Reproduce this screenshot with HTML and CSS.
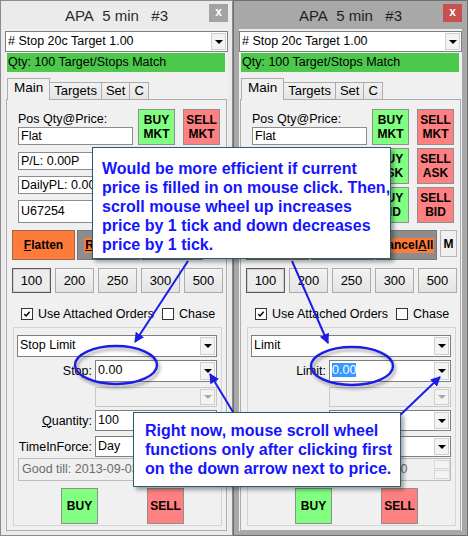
FILE: index.html
```html
<!DOCTYPE html>
<html lang="en">
<head>
    <meta charset="UTF-8">
    <meta name="viewport" content="width=device-width, initial-scale=1.0">
    <title>APA 5 min #3 - Order Entry</title>
    <link rel="stylesheet" href="styles.css">
</head>
<body>

<div class="desk">

    <!-- inactive window: stop limit -->
    <div class="win win-left">
        <div class="titlebar">
            <span></span>
            <span class="title">APA&nbsp; 5 min &nbsp; #3</span>
            <span class="close">x</span>
        </div>
        <div class="client">
            <div class="combo strategy"><span class="val"># Stop 20c Target 1.00</span><span class="drop"></span></div>
            <div class="status">Qty: 100 Target/Stops Match</div>
            <div class="tabs">
                <span class="tab active">Main</span>
                <span class="tab">Targets</span>
                <span class="tab">Set</span>
                <span class="tab">C</span>
            </div>
            <div class="pane">
                <div class="top">
                    <div class="fields">
                        <div class="lbl">Pos Qty@Price:</div>
                        <div class="box pos">Flat</div>
                        <div class="box pl">P/L: 0.00P</div>
                        <div class="box pl">DailyPL: 0.00P</div>
                        <div class="box acct">U67254</div>
                    </div>
                    <div class="orders">
                        <button class="ord buy">BUY<br>MKT</button>
                        <button class="ord sell">SELL<br>MKT</button>
                        <button class="ord buy">BUY<br>ASK</button>
                        <button class="ord sell">SELL<br>ASK</button>
                        <button class="ord buy">BUY<br>BID</button>
                        <button class="ord sell">SELL<br>BID</button>
                    </div>
                </div>
                <div class="actions">
                    <button class="act flat"><u>F</u>latten</button>
                    <button class="act grey"><span><u>R</u>everse</span></button>
                    <button class="act grey"><span>Cancel<u>A</u>ll</span></button>
                    <button class="act m">M</button>
                </div>
                <div class="qtys">
                    <button class="qty on">100</button>
                    <button class="qty">200</button>
                    <button class="qty">250</button>
                    <button class="qty">300</button>
                    <button class="qty">500</button>
                </div>
                <div class="checks">
                    <span class="chk on"><svg viewBox="0 0 13 13"><path d="M3 6.5 L5.3 9 L10 3.5" /></svg></span>
                    <span class="chk-text attach">Use Attached Orders</span>
                    <span class="chk"></span>
                    <span class="chk-text">Chase</span>
                </div>
                <div class="group">
                    <div class="combo type"><span class="val">Stop Limit</span><span class="drop"></span></div>
                    <div class="row r-price"><span class="rl">Stop:</span><div class="combo"><span class="val">0.00</span><span class="drop"></span></div></div>
                    <div class="row r-off"><span class="rl"></span><div class="combo off"><span class="val"></span><span class="drop"></span></div></div>
                    <div class="row r-qty"><span class="rl"><u>Q</u>uantity:</span><div class="combo"><span class="val">100</span><span class="drop"></span></div></div>
                    <div class="row r-tif"><span class="rl">TimeInForce:</span><div class="combo"><span class="val">Day</span><span class="drop"></span></div></div>
                    <div class="gtd"><span class="val">Good till: 2013-09-03 16:00</span><span class="spin"><i></i><i></i></span></div>
                    <div class="sides">
                        <button class="side buy">BUY</button>
                        <button class="side sell">SELL</button>
                    </div>
                </div>
            </div>
        </div>
    </div>

    <!-- active window: limit -->
    <div class="win win-right">
        <div class="titlebar">
            <span></span>
            <span class="title">APA&nbsp; 5 min &nbsp; #3</span>
            <span class="close">x</span>
        </div>
        <div class="client">
            <div class="combo strategy"><span class="val"># Stop 20c Target 1.00</span><span class="drop"></span></div>
            <div class="status">Qty: 100 Target/Stops Match</div>
            <div class="tabs">
                <span class="tab active">Main</span>
                <span class="tab">Targets</span>
                <span class="tab">Set</span>
                <span class="tab">C</span>
            </div>
            <div class="pane">
                <div class="top">
                    <div class="fields">
                        <div class="lbl">Pos Qty@Price:</div>
                        <div class="box pos">Flat</div>
                        <div class="box pl">P/L: 0.00P</div>
                        <div class="box pl">DailyPL: 0.00P</div>
                        <div class="box acct">U67254</div>
                    </div>
                    <div class="orders">
                        <button class="ord buy">BUY<br>MKT</button>
                        <button class="ord sell">SELL<br>MKT</button>
                        <button class="ord buy">BUY<br>ASK</button>
                        <button class="ord sell">SELL<br>ASK</button>
                        <button class="ord buy">BUY<br>BID</button>
                        <button class="ord sell">SELL<br>BID</button>
                    </div>
                </div>
                <div class="actions">
                    <button class="act flat"><u>F</u>latten</button>
                    <button class="act grey"><span><u>R</u>everse</span></button>
                    <button class="act grey"><span>Cancel<u>A</u>ll</span></button>
                    <button class="act m">M</button>
                </div>
                <div class="qtys">
                    <button class="qty on">100</button>
                    <button class="qty">200</button>
                    <button class="qty">250</button>
                    <button class="qty">300</button>
                    <button class="qty">500</button>
                </div>
                <div class="checks">
                    <span class="chk on"><svg viewBox="0 0 13 13"><path d="M3 6.5 L5.3 9 L10 3.5" /></svg></span>
                    <span class="chk-text attach">Use Attached Orders</span>
                    <span class="chk"></span>
                    <span class="chk-text">Chase</span>
                </div>
                <div class="group">
                    <div class="combo type"><span class="val">Limit</span><span class="drop"></span></div>
                    <div class="row r-price"><span class="rl">Limit:</span><div class="combo"><span class="val"><span class="sel">0.00</span></span><span class="drop"></span></div></div>
                    <div class="row r-off"><span class="rl"></span><div class="combo off"><span class="val"></span><span class="drop"></span></div></div>
                    <div class="row r-qty"><span class="rl"><u>Q</u>uantity:</span><div class="combo"><span class="val">100</span><span class="drop"></span></div></div>
                    <div class="row r-tif"><span class="rl">TimeInForce:</span><div class="combo"><span class="val">Day</span><span class="drop"></span></div></div>
                    <div class="gtd"><span class="val">Good till: 2013-09-03 16:00</span><span class="spin"><i></i><i></i></span></div>
                    <div class="sides">
                        <button class="side buy">BUY</button>
                        <button class="side sell">SELL</button>
                    </div>
                </div>
            </div>
        </div>
    </div>

    <!-- annotations drawn over the screenshot -->
    <svg class="marks" width="468" height="536" viewBox="0 0 468 536">
        <defs>
            <marker id="head" viewBox="0 0 10 10" refX="9" refY="5" markerWidth="5" markerHeight="5" orient="auto">
                <path d="M0 0 L10 5 L0 10 z" fill="#1c1ce8" />
            </marker>
            <filter id="soft" x="-20%" y="-40%" width="140%" height="180%">
                <feGaussianBlur stdDeviation="1.6" />
            </filter>
        </defs>
        <ellipse cx="118" cy="368" rx="41" ry="19" class="ring-shadow" filter="url(#soft)" />
        <ellipse cx="354" cy="369" rx="41" ry="19" class="ring-shadow" filter="url(#soft)" />
        <ellipse cx="116" cy="365" rx="41" ry="19" class="ring" />
        <ellipse cx="352" cy="366" rx="41" ry="19" class="ring" />
        <line x1="188" y1="261" x2="135" y2="342" class="arrow" marker-end="url(#head)" />
        <line x1="292" y1="261" x2="328" y2="343" class="arrow" marker-end="url(#head)" />
        <line x1="233" y1="412" x2="210" y2="374" class="arrow" marker-end="url(#head)" />
        <line x1="395" y1="420" x2="440" y2="377" class="arrow" marker-end="url(#head)" />
    </svg>

    <div class="callout c-top">Would be more efficient if current<br>price is filled in on mouse click. Then,<br>scroll mouse wheel up increases<br>price by 1 tick and down decreases<br>price by 1 tick.</div>
    <div class="callout c-bottom">Right now, mouse scroll wheel<br>functions only after clicking first<br>on the down arrow next to price.</div>

</div>

</body>
</html>
```

FILE: styles.css
```css
* {
    box-sizing: border-box;
}
body {
    margin: 0;
    font-family: "Liberation Sans", Arial, sans-serif;
    font-size: 12.5px;
    color: #000;
    background: #a6a6a6;
}
button {
    font-family: inherit;
    font-size: 12px;
    color: #000;
    margin: 0;
    padding: 0;
    cursor: pointer;
}
u {
    text-decoration-thickness: 1px;
    text-underline-offset: 1px;
}

.desk {
    position: relative;
    width: 468px;
    height: 536px;
    display: flex;
    overflow: hidden;
}

/* window frames */
.win {
    display: flex;
    flex-direction: column;
    height: 536px;
    border: 1px solid #8c8c8c;
    padding: 0 4px 4px;
}
.win-left {
    width: 233px;
    background: #ebebeb;
}
.win-right {
    width: 235px;
    background: #a8a8a8;
    padding: 0 5px 4px;
    border-color: #6f6f6f;
}
.titlebar {
    height: 28px;
    display: grid;
    grid-template-columns: 19px 1fr 19px;
    align-items: center;
    font-size: 15px;
    color: #2b2b2b;
}
.title {
    text-align: center;
    white-space: nowrap;
}
.close {
    height: 18px;
    margin-top: -5px;
    background: #a3a3a3;
    color: #fff;
    font-size: 12px;
    font-weight: bold;
    text-align: center;
    line-height: 17px;
}
.win-right .close {
    background: #c75050;
}
.win-right .title {
    color: #1e1e1e;
}

.client {
    flex: 1;
    display: flex;
    flex-direction: column;
    background: #f0f0f0;
    padding-top: 2px;
}

/* combo boxes */
.combo {
    display: flex;
    align-items: stretch;
    background: #fff;
    border: 1px solid #7f7f7f;
    height: 21px;
}
.combo .val {
    flex: 1;
    padding-left: 2px;
    line-height: 19px;
    white-space: nowrap;
    overflow: hidden;
}
.combo .drop {
    width: 15px;
    margin: 1px;
    background: #f3f3f3;
    border: 1px solid #cfcfcf;
    display: flex;
    align-items: center;
    justify-content: center;
}
.combo .drop::after {
    content: "";
    border-left: 4px solid transparent;
    border-right: 4px solid transparent;
    border-top: 4px solid #000;
}
.combo.off {
    border-color: #c8c8c8;
    background: #f0f0f0;
}
.combo.off .drop::after {
    border-top-color: #a8a8a8;
}
.sel {
    background: #3399ff;
    color: #fff;
}

.status {
    height: 19px;
    margin: 1px 3px 0 2px;
    padding-left: 1px;
    background: #4cc94c;
    line-height: 19px;
    white-space: nowrap;
}

/* tabs */
.tabs {
    display: flex;
    align-items: flex-end;
    height: 21px;
    margin-top: 6px;
    padding-left: 2px;
}
.tab {
    height: 17px;
    padding: 0 4px;
    border: 1px solid #acacac;
    border-bottom: none;
    margin-left: -1px;
    background: linear-gradient(#f2f2f2, #e5e5e5);
    line-height: 16px;
    font-size: 13px;
}
.tab.active {
    height: 22px;
    margin-bottom: -1px;
    padding: 0 6px;
    margin-left: 0;
    background: #f0f0f0;
    position: relative;
    line-height: 18px;
    font-size: 13.5px;
}

.pane {
    flex: 1;
    margin: 0 1px;
    border: 1px solid #acacac;
    display: flex;
    flex-direction: column;
}

/* position block */
.top {
    display: flex;
    margin-top: 9px;
    padding-left: 11px;
}
.fields {
    width: 115px;
}
.lbl {
    margin-top: 3px;
    line-height: 14px;
}
.box {
    background: #fff;
    border: 1px solid #8d8d8d;
    height: 18px;
    line-height: 16px;
    padding-left: 2px;
    white-space: nowrap;
    overflow: hidden;
}
.box.pos {
    margin-top: 1px;
}
.box.pl {
    margin-top: 7px;
}
.box.pl + .box.pl {
    margin-top: 6px;
}
.box.acct {
    margin-top: 6px;
    height: 23px;
    line-height: 21px;
}
.orders {
    margin-left: 5px;
    display: grid;
    grid-template-columns: 37px 37px;
    grid-auto-rows: 36px;
    column-gap: 8px;
    row-gap: 3px;
}
.ord {
    border: 1px solid #8f8f8f;
    font-weight: bold;
    line-height: 14px;
}
.buy {
    background: #80ff80;
}
.sell {
    background: #ff8080;
}

/* action buttons */
.actions {
    display: flex;
    height: 30px;
    margin-top: 7px;
    padding-left: 5px;
}
.act {
    height: 100%;
    font-weight: bold;
    font-size: 12px;
    overflow: hidden;
    white-space: nowrap;
}
.act.flat {
    width: 63px;
    background: #ff7b3a;
    border: 1px solid #9a6a50;
}
.act.grey {
    width: 63px;
    margin-left: 2px;
    background: #8d8d8d;
    border: 1px solid #777;
}
.act.grey + .act.grey {
    width: 62px;
    margin-left: 1px;
}
.act.grey span {
    display: inline-block;
    background: #ff7b3a;
    padding: 0 1px;
    line-height: 15px;
}
.act.m {
    width: 17px;
    height: 27px;
    margin-left: 3px;
    background: #f0f0f0;
    border: 1px solid #b5b5b5;
}

.qtys {
    display: flex;
    gap: 4px;
    margin-top: 8px;
    padding-left: 5px;
    height: 25px;
}
.qty {
    width: 39px;
    font-size: 13px;
    background: linear-gradient(#f3f3f3, #e4e4e4);
    border: 1px solid #acacac;
}
.qty.on {
    border: 1px solid #5a5a5a;
    box-shadow: inset 0 0 0 1px #d0d0d0;
    background: #ececec;
}

/* checkboxes */
.checks {
    display: flex;
    align-items: center;
    height: 13px;
    margin-top: 14px;
    padding-left: 14px;
    white-space: nowrap;
}
.chk {
    flex: none;
    width: 12px;
    height: 12px;
    border: 1px solid #333;
    background: #fff;
    display: flex;
}
.chk svg {
    width: 100%;
    height: 100%;
    fill: none;
    stroke: #000;
    stroke-width: 1.8;
}
.chk-text {
    margin-left: 5px;
}
.chk-text.attach {
    width: 124px;
}

/* order group */
.group {
    margin: 7px 0 0 6px;
    width: 209px;
    border: 1px solid #d5d5d5;
    padding: 7px 4px 1px 3px;
}
.combo.type {
    height: 22px;
}
.row {
    display: flex;
    align-items: center;
    gap: 3px;
}
.row .rl {
    width: 75px;
    text-align: right;
    white-space: nowrap;
}
.row .combo {
    flex: 1;
}
.r-price {
    margin-top: 3px;
}
.r-price .combo {
    height: 22px;
}
.r-off {
    margin-top: 5px;
}
.r-off .combo {
    height: 20px;
}
.r-qty {
    margin-top: 3px;
}
.r-tif {
    margin-top: 5px;
}
.gtd {
    margin: 1px 0 0 1px;
    height: 23px;
    display: flex;
    border: 1px solid #bcbcbc;
    background: #f0f0f0;
    color: #6d6d6d;
}
.gtd .val {
    flex: 1;
    padding-left: 3px;
    line-height: 21px;
    white-space: nowrap;
    overflow: hidden;
}
.spin {
    width: 16px;
    display: flex;
    flex-direction: column;
    gap: 1px;
    padding: 1px 0;
}
.spin i {
    flex: 1;
    border: 1px solid #d6d6d6;
    background: #f4f4f4;
}
.sides {
    display: flex;
    margin-top: 7px;
    height: 36px;
}
.side {
    width: 37px;
    border: 1px solid #8f8f8f;
    font-weight: bold;
}
.side.buy {
    margin-left: 44px;
}
.side.sell {
    margin-left: 49px;
}

/* annotations */
.marks {
    position: absolute;
    left: 0;
    top: 0;
    pointer-events: none;
}
.ring {
    fill: none;
    stroke: #1c1ce8;
    stroke-width: 2.4;
}
.ring-shadow {
    fill: none;
    stroke: rgba(0, 0, 0, 0.28);
    stroke-width: 3;
}
.arrow {
    stroke: #1c1ce8;
    stroke-width: 2;
}
.callout {
    position: absolute;
    background: #fff;
    border: 1px solid #24606c;
    box-shadow: 3px 3px 4px rgba(0, 0, 0, 0.35);
    color: #1414ff;
    font-weight: bold;
    font-size: 16px;
    line-height: 19px;
    white-space: nowrap;
}
.c-top {
    left: 92px;
    top: 147px;
    width: 299px;
    height: 112px;
    padding: 11px 8px 0 9px;
}
.c-bottom {
    left: 133px;
    top: 412px;
    width: 268px;
    height: 75px;
    padding: 8px 6px 0 11px;
}
```
